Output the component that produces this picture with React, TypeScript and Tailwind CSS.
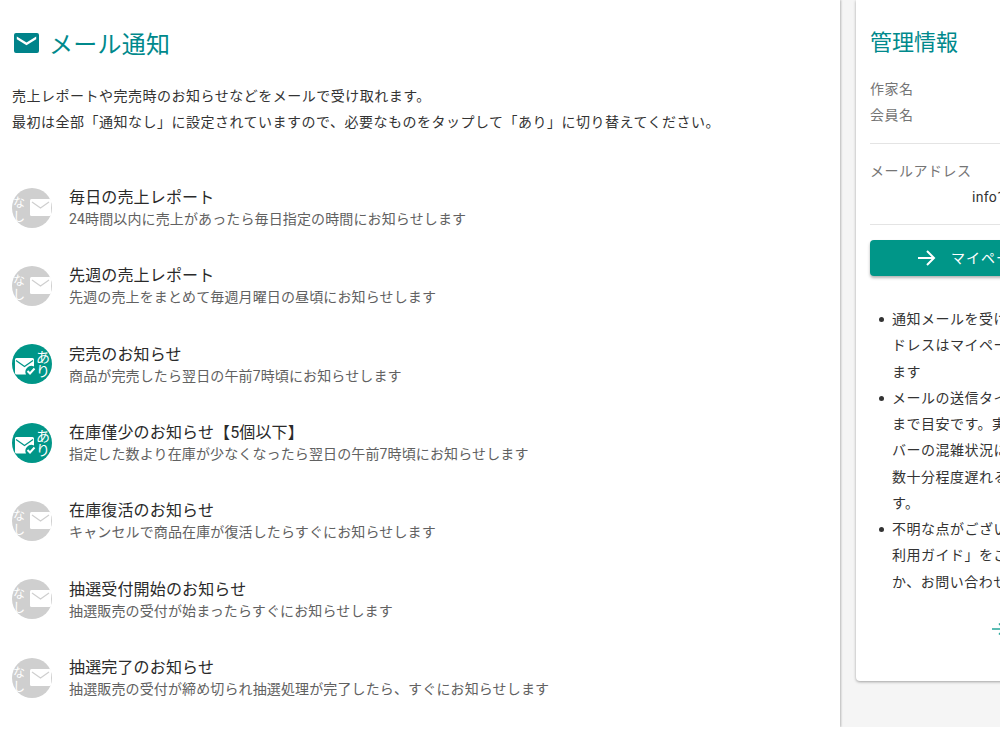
const font = "font-['Roboto','Noto_Sans_CJK_JP',sans-serif]";

const notifications = [
  { title: "毎日の売上レポート", desc: "24時間以内に売上があったら毎日指定の時間にお知らせします", on: false },
  { title: "先週の売上レポート", desc: "先週の売上をまとめて毎週月曜日の昼頃にお知らせします", on: false },
  { title: "完売のお知らせ", desc: "商品が完売したら翌日の午前7時頃にお知らせします", on: true },
  { title: "在庫僅少のお知らせ【5個以下】", desc: "指定した数より在庫が少なくなったら翌日の午前7時頃にお知らせします", on: true },
  { title: "在庫復活のお知らせ", desc: "キャンセルで商品在庫が復活したらすぐにお知らせします", on: false },
  { title: "抽選受付開始のお知らせ", desc: "抽選販売の受付が始まったらすぐにお知らせします", on: false },
  { title: "抽選完了のお知らせ", desc: "抽選販売の受付が締め切られ抽選処理が完了したら、すぐにお知らせします", on: false },
];

const notes = [
  ["通知メールを受け取るメールア", "ドレスはマイページで変更でき", "ます"],
  ["メールの送信タイミングはあく", "まで目安です。実際の時間はサー", "バーの混雑状況によりますが、", "数十分程度遅れる場合がありま", "す。"],
  ["不明な点がございましたら「ご", "利用ガイド」をご確認いただく", "か、お問い合わせください。"],
];

function HeadingMail() {
  return (
    <svg viewBox="0 0 25 20" className="mb-1 ml-[2px] w-[25px] h-5 text-[#00838a]">
      <path
        fill="currentColor"
        d="M2 0h21a2 2 0 0 1 2 2v16a2 2 0 0 1-2 2H2a2 2 0 0 1-2-2V2a2 2 0 0 1 2-2zm.8 3.6v2.6l9.7 6 9.7-6V3.6l-9.7 6z"
      />
    </svg>
  );
}

function StatusBadge({ on }: { on: boolean }) {
  if (on) {
    return (
      <div className="relative mb-[2px] w-10 h-10 shrink-0 rounded-full bg-[#009688] text-white">
        <svg viewBox="0 0 21 18" className="absolute left-[3px] top-[14px] w-[21px] h-[18px]">
          <path fill="currentColor" d="M1.5 0h16A1.5 1.5 0 0 1 19 1.5v7a6 6 0 0 0-8 8H1.5A1.5 1.5 0 0 1 0 15V1.5A1.5 1.5 0 0 1 1.5 0z" />
          <path fill="none" stroke="#009688" strokeWidth="1.3" d="M1 2.5l8.5 6 8.5-6" />
          <path fill="none" stroke="currentColor" strokeWidth="2" d="M12.5 13l2.5 2.5 4.5-5" />
        </svg>
        <span className="absolute left-[24px] top-[6px] flex flex-col text-[14px] leading-[14px]">
          <span>あ</span>
          <span>り</span>
        </span>
      </div>
    );
  }
  return (
    <div className="relative mb-[2px] w-10 h-10 shrink-0 rounded-full bg-[#cfcfcf] text-white">
      <span className="absolute left-[1px] top-[8px] flex flex-col text-[12px] leading-[14px]">
        <span>な</span>
        <span>し</span>
      </span>
      <svg viewBox="0 0 21 17" className="absolute left-[18px] top-[11px] w-[21px] h-[17px]">
        <rect width="21" height="17" rx="1.5" fill="currentColor" />
        <path fill="none" stroke="#cfcfcf" strokeWidth="1.2" d="M2 3l8.5 6L19 3" />
      </svg>
    </div>
  );
}

function Arrow({ className }: { className: string }) {
  return (
    <svg viewBox="0 0 18 16" className={className} fill="none" stroke="currentColor" strokeWidth="2">
      <path d="M0 8h16M9 1l7 7-7 7" />
    </svg>
  );
}

export default function App() {
  return (
    <div className={`${font} w-[1000px] h-[740px] overflow-hidden bg-white`}>
      <div className="flex h-[727px] overflow-hidden bg-[#f5f5f5]">
        {/* Main panel */}
        <main className="relative z-10 w-[840px] shrink-0 bg-white pl-3 shadow-[1px_0_2px_rgba(0,0,0,0.25)]">
          <div className="flex items-center pt-[27px] h-[63px]">
            <HeadingMail />
            <h1 className="ml-[10px] text-2xl leading-9 tracking-[0.25px] text-[#00898c]">メール通知</h1>
          </div>
          <p className="mt-[20px] text-sm leading-[26.25px] tracking-[0.5px] text-[#333]">
            売上レポートや完売時のお知らせなどをメールで受け取れます。
            <br />
            最初は全部「通知なし」に設定されていますので、必要なものをタップして「あり」に切り替えてください。
          </p>
          <ul className="mt-[34px] flex flex-col">
            {notifications.map((n) => (
              <li key={n.title} className="flex items-center gap-[17px] h-[78.33px]">
                <StatusBadge on={n.on} />
                <div>
                  <div className="text-base leading-5 tracking-[0.15px] text-[#2a2a2a]">{n.title}</div>
                  <div className="mt-[1px] text-sm leading-5 tracking-[0.13px] text-[#616161]">{n.desc}</div>
                </div>
              </li>
            ))}
          </ul>
        </main>

        {/* Side column */}
        <div className="flex-1 pl-4">
          <aside className="w-[300px] h-[681px] rounded-b bg-white px-[14px] shadow-[0_1px_3px_rgba(0,0,0,0.35)]">
            <h2 className="pt-[25px] text-[22px] leading-9 text-[#00898c]">管理情報</h2>
            <dl className="mt-[15px] text-sm leading-[26.25px] tracking-[0.5px] text-[#757575]">
              <dt>作家名</dt>
              <dt>会員名</dt>
            </dl>
            <hr className="mt-[14px] border-[#e4e4e4]" />
            <div className="mt-[14px] text-sm leading-[26.25px] tracking-[0.5px] text-[#757575]">メールアドレス</div>
            <div className="pl-[102px] text-sm leading-[26.25px] tracking-[0.25px] text-[#333]">info1@example.com</div>
            <hr className="mt-[14px] border-[#e4e4e4]" />
            <button className="mt-[15px] flex h-9 w-full items-center rounded bg-[#009688] pl-[48px] text-sm tracking-[1px] text-white shadow-[0_2px_3px_rgba(0,0,0,0.3)]">
              <Arrow className="mr-[15px] w-[18px] h-4" />
              マイページへ
            </button>
            <ul className="mt-[30px] text-sm leading-[26.25px] tracking-[0.5px] text-[#333]">
              {notes.map((lines) => (
                <li key={lines[0]} className="relative whitespace-nowrap pl-[22px]">
                  <span className="absolute left-[9px] top-[11px] w-[5px] h-[5px] rounded-full bg-[#333]" />
                  {lines.map((l) => (
                    <div key={l}>{l}</div>
                  ))}
                </li>
              ))}
            </ul>
            <div className="mt-[24px] flex items-center pl-[122px] text-sm text-[#26a69a]">
              <Arrow className="mr-2 w-[14px] h-[14px]" />
              ご利用ガイド
            </div>
          </aside>
        </div>
      </div>
    </div>
  );
}
